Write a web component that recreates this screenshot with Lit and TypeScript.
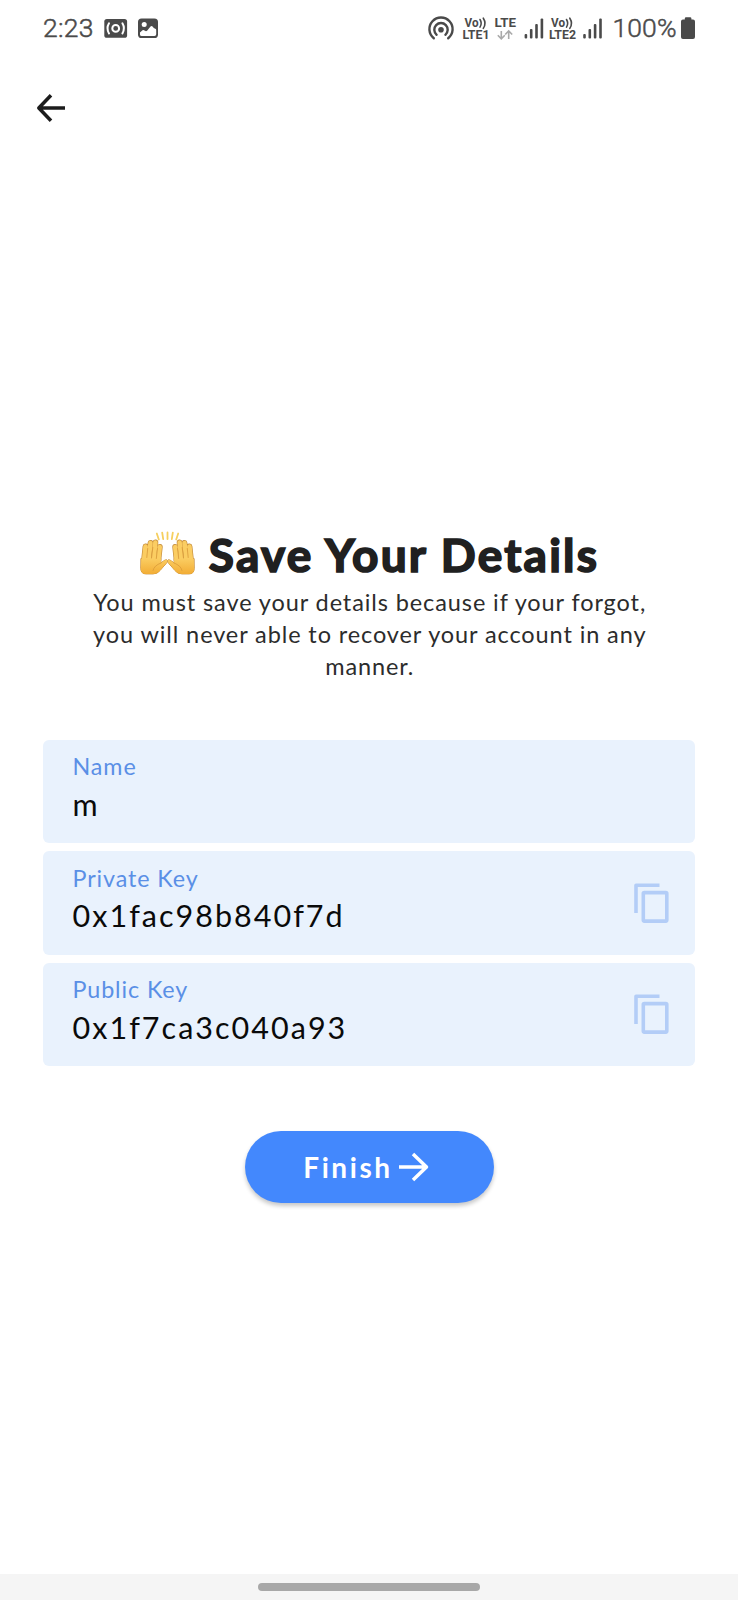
import { LitElement, html, css, svg, nothing } from "lit";
import { customElement, property } from "lit/decorators.js";

@customElement("status-bar")
class StatusBar extends LitElement {
  static styles = css`
    :host { display: block; height: 58px; }
    svg { display: block; font-family: Roboto, "Liberation Sans", sans-serif; fill: #4a4a4a; }
    .big { font-size: 26.5px; font-weight: 300; stroke: #4a4a4a; stroke-width: 0.5px; }
    .small { font-size: 12.5px; font-weight: 700; }
    .line { fill: none; stroke: #4a4a4a; stroke-linecap: round; }
    .white { fill: #fff; }
    .wline { fill: none; stroke: #fff; stroke-width: 2; stroke-linecap: round; }
    .faint { fill: none; stroke: #aaa; stroke-width: 1.6; }
  `;
  private sim(x: number, name: string) {
    return svg`<g transform="translate(${x} 0)">
      <text class="small" x="2" y="27" textLength="14" lengthAdjust="spacingAndGlyphs">Vo</text>
      <path class="line" stroke-width="1.6" d="M17.500 19.500q2.400 3.800 0 7.600M20.800 18.200q3.400 5.200 0 10.200"/>
      <text class="small" x="0" y="39" textLength="27" lengthAdjust="spacingAndGlyphs">${name}</text>
    </g>`;
  }
  private bars(x: number) {
    return svg`<g transform="translate(${x} 0)">
      <rect x="0" y="34" width="2.6" height="4.5" rx="1"/><rect x="5.3" y="29" width="2.6" height="9.5" rx="1"/>
      <rect x="10.6" y="24" width="2.6" height="14.5" rx="1"/><rect x="16" y="18.5" width="2.6" height="20" rx="1"/></g>`;
  }
  render() {
    return html`<svg width="738" height="58" viewBox="0 0 738 58">
      <text class="big" x="43" y="36.5" textLength="50.5">2:23</text>
      <rect x="104.3" y="19" width="22.8" height="18.8" rx="2.6"/>
      <circle class="wline" cx="115.7" cy="28.4" r="3.4"/>
      <path class="wline" d="M109 23.300q-3 5 0 10.200M122.400 23.300q3 5 0 10.200"/>
      <rect x="138" y="18.500" width="20" height="19.500" rx="3.600"/>
      <circle class="white" cx="144.200" cy="24.600" r="2.500"/>
      <path class="white" d="M140 34.500V32.500l2.500-2.300q1.200-.7 2 .2l1 .7q1 .3 1.800-.6l3.200-4q1.200-1 2.300.2l1 1.400q1 .4 2 .8 .4.400.4 1.400v4q0 1.800-1.800 1.800h-12.600q-1.800 0-1.800-1.600z"/>
      <circle cx="441" cy="29.700" r="2.800"/>
      <path class="line" stroke-width="2.400" d="M436.600 34.800a6.700 6.700 0 1 1 8.800 0M433.800 38.200a11.600 11.600 0 1 1 14.400 0"/>
      ${this.sim(462.5, "LTE1")}
      <text class="small" x="494.500" y="27.300" textLength="21.500" lengthAdjust="spacingAndGlyphs">LTE</text>
      <path class="faint" d="M501.300 31v7.500M497.800 35.300l3.500 3.500 3.500-3.500M508.700 39v-7.500M505.200 34.500l3.500-3.500 3.500 3.500"/>
      ${this.bars(524.6)}
      ${this.sim(549, "LTE2")}
      ${this.bars(583.2)}
      <text class="big" x="612.500" y="37" textLength="64">100%</text>
      <path d="M684.800 19.500v-1q0-1.300 1.300-1.300h4q1.300 0 1.300 1.300v1h1.600q2 0 2 2v15.500q0 2-2 2h-10q-2 0-2-2v-15.500q0-2 2-2z"/>
    </svg>`;
  }
}

@customElement("detail-field")
class DetailField extends LitElement {
  @property() label = "";
  @property() value = "";
  @property({ type: Boolean }) copyable = false;
  static styles = css`
    :host { display: flex; align-items: center; justify-content: space-between; height: 103.5px; box-sizing: border-box;
      padding: 0 26px 0 29.5px; background: #e9f2fd; border-radius: 6px; }
    .texts { display: flex; flex-direction: column; padding-bottom: 5.5px; }
    .label { font-size: 23.3px; line-height: 31.5px; letter-spacing: 0.9px; color: #5a8fe6; }
    .value { font-size: 30.5px; line-height: 43px; letter-spacing: 2.02px; color: #0a0a0a; }
    svg { fill: none; stroke: #b3cdf7; stroke-width: 3.6; stroke-linejoin: round; }
  `;
  render() {
    return html`<div class="texts"><span class="label">${this.label}</span><span class="value">${this.value}</span></div>
      ${this.copyable
        ? html`<svg width="36" height="40" viewBox="0 0 36 40"><path d="M26.500 2.300H3V30"/><rect x="10.300" y="9.600" width="23.500" height="28.500" rx="1"/></svg>`
        : nothing}`;
  }
}

@customElement("app-root")
class AppRoot extends LitElement {
  static styles = css`
    :host { display: flex; flex-direction: column; height: 1600px; background: #fff; overflow: hidden;
      font-family: Lato, "Noto Sans", sans-serif; }
    .back { display: block; margin: 35px 0 0 36px; flex: none; }
    .arrow { fill: none; stroke-width: 3.5; stroke-linejoin: round; }
    .dark { stroke: #1c1c1c; }
    .light { stroke: #fff; }
    .content { display: flex; flex-direction: column; align-items: center; padding: 402px 43px 0; }
    .title { display: flex; align-items: center; gap: 13px; margin: 0; font-size: 46px; line-height: 60px;
      font-weight: 700; letter-spacing: 2.25px; color: #202020; white-space: nowrap; }
    .title span { -webkit-text-stroke: 1.7px #202020; stroke-linejoin: round; }
    .copy { margin: 1px 0 0; display: flex; flex-direction: column; align-items: center; font-size: 23.5px; line-height: 32.2px; letter-spacing: 0.9px; padding-left: 1.5px; color: #2c2c2c; white-space: nowrap; }
    .fields { display: flex; flex-direction: column; gap: 8px; align-self: stretch; margin-top: 57px; }
    .finish { display: flex; align-items: center; justify-content: center; gap: 6.5px; width: 249px; height: 72px; margin-top: 65px;
      padding: 0 5.5px 0 0; border: 0; border-radius: 36px; background: #4388fd; color: #fff; font: 700 28px Lato, sans-serif; letter-spacing: 2.6px;
      box-shadow: 0 3px 4px rgba(0,0,0,.22); }
    .nav { margin-top: auto; height: 26.5px; background: #f5f5f5; display: flex; align-items: center; justify-content: center; }
    .pill { width: 222px; height: 8px; border-radius: 4px; background: #a8a8a8; }
    .hands { fill: none; stroke-linecap: round; stroke-linejoin: round; }
    .edge { stroke: #c48c3c; stroke-width: 5.8; }
    .finger { stroke: #fbcd62; stroke-width: 4.5; }
    .crease { stroke: #d99a3a; stroke-width: 0.8; }
    .rays { stroke: #f6cf5e; stroke-width: 1.8; }
  `;
  private hand() {
    const fingers = "M5 30L6.500 16M9.500 30L11.500 12.500M14.600 30L16.400 12M19.200 31L20.800 16.500";
    const palm = "M2.300 28h19.500v4.500l4-2.800q2-1 2.500.3.500 1.200-1 2.800L21 40q-2.500 3.400-7 3.400H7q-5 0-5.200-5z";
    return svg`<path class="edge" d=${fingers}/><path d=${palm} fill="#f5b840" stroke="#c48c3c" stroke-width="1"/>
      <path class="finger" d=${fingers}/><path d=${palm} fill="url(#skin)"/>
      <path class="crease" d="M7.800 27L8.700 18M12.600 27L13.800 17M17.300 28L18.500 18M14 40q1-5 8-7.500"/>`;
  }
  render() {
    return html`<status-bar></status-bar>
      <svg class="back arrow dark" width="30" height="30" viewBox="0 0 30 30"><path d="M29 15H3M15 2.300L2.800 15 15 27.700"/></svg>
      <main class="content">
        <h1 class="title">
          <svg class="hands" width="57" height="50" viewBox="0 -.5 57 50">
            <defs><linearGradient id="skin" x1="0" y1="0" x2="0" y2="1"><stop offset="0" stop-color="#fbcd62"/><stop offset="1" stop-color="#f2ad35"/></linearGradient></defs>
            <path class="rays" d="M17.800 3l2 6M23.200 2.200l1 6.500M28.500 2v6.500M33.800 2.200l-1 6.500M39.200 3l-2 6"/>
            ${this.hand()}<g transform="translate(57 0) scale(-1 1)">${this.hand()}</g>
          </svg><span>Save Your Details</span>
        </h1>
        <p class="copy"><span>You must save your details because if your forgot,</span><span>you will never able to recover your account in any</span><span>manner.</span></p>
        <div class="fields">
          <detail-field label="Name" value="m"></detail-field>
          <detail-field label="Private Key" value="0x1fac98b840f7d" copyable></detail-field>
          <detail-field label="Public Key" value="0x1f7ca3c040a93" copyable></detail-field>
        </div>
        <button class="finish"><span>Finish</span><svg class="arrow light" width="30" height="30" viewBox="0 0 30 30"><path d="M0 15H27M14 2L27.500 15 14 28"/></svg></button>
      </main>
      <div class="nav"><div class="pill"></div></div>`;
  }
}
